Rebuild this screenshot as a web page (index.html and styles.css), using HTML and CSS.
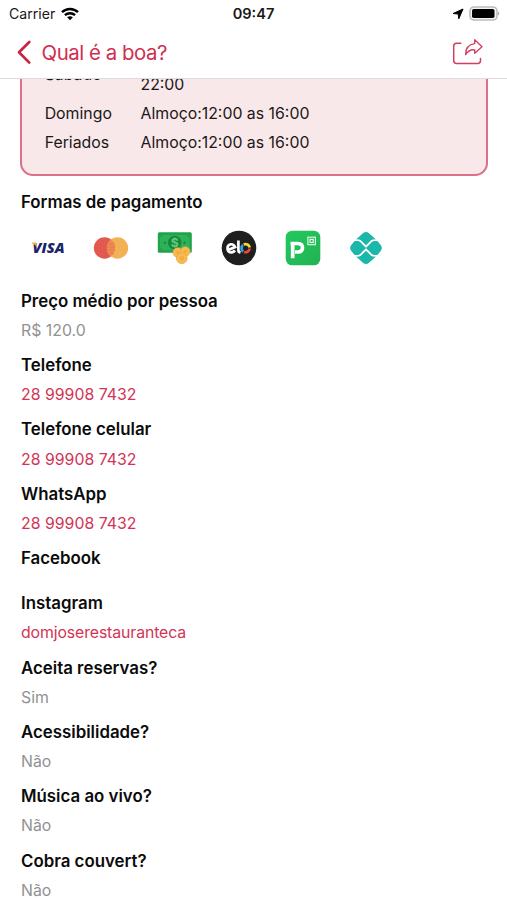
FILE: index.html
```
<!DOCTYPE html>
<html lang="pt-BR">
<head>
<meta charset="utf-8">
<meta name="viewport" content="width=device-width, initial-scale=1">
<title>Qual é a boa?</title>
<link rel="stylesheet" href="styles.css">
</head>
<body>
<header class="header">
  <div class="status">
    <div class="status-left">
      <span class="carrier">Carrier</span>
      <svg width="18" height="14" viewBox="0 0 18 14" fill="none" stroke="#000" stroke-width="2.4"><path d="M1 5.2C5.5.9 12.500.9 17 5.200M3.900 8.200C6.800 5.500 11.200 5.500 14.100 8.200"/><path d="M9 13.200 6.100 10.300Q9 8 11.900 10.300Z" fill="#000" stroke="none"/></svg>
    </div>
    <span class="clock">09:47</span>
    <div class="status-right">
      <svg width="12" height="12" viewBox="0 0 12 12"><path d="M11 1 6.800 10.800 6.200 6 1.100 5.500Z" fill="#000" stroke="#000" stroke-width="1" stroke-linejoin="round"/></svg>
      <svg width="31" height="16" viewBox="0 0 31 16"><rect x="1" y="1" width="27" height="13" rx="4" fill="#f4f4f4" stroke="#bcbcbc" stroke-width="1.600"/><rect x="3" y="2.900" width="22.500" height="9.200" rx="1.800"/><path d="M29 5.500Q31.500 7.500 29 9.500Z" fill="#aaa"/></svg>
    </div>
  </div>
  <nav class="nav">
    <a class="back">
      <svg width="16" height="25" viewBox="0 0 16 25"><path d="M13.300 2 3 12.300 13.300 22.600" fill="none" stroke="#cb2443" stroke-width="2.700" stroke-linecap="round" stroke-linejoin="round"/></svg>
      <span class="nav-title">Qual é a boa?</span>
    </a>
    <svg width="32" height="28" viewBox="0 0 32 28" fill="none" stroke="#d23f5f" stroke-width="1.500" stroke-linecap="round" stroke-linejoin="round"><path d="M8.800 5.200H4.500Q1.700 5.200 1.700 8V22.500Q1.700 25.500 4.700 25.500H25.700Q28.500 25.500 28.500 22.500V20.500"/><path d="M13.600 16.700C13.500 10.500 16.500 6.500 22.700 5.700V1.700L30 8.800 22.700 15.300V11.800C18.500 11.300 16 12.800 13.600 16.700Z" stroke-width="1.300"/></svg>
  </nav>
</header>
<main class="content">
  <section class="hours">
    <div class="hours-row tall"><span class="day">Sábado</span><span class="time last-line">22:00</span></div>
    <div class="hours-row"><span class="day">Domingo</span><span class="time">Almoço:12:00 as 16:00</span></div>
    <div class="hours-row"><span class="day">Feriados</span><span class="time">Almoço:12:00 as 16:00</span></div>
  </section>
  <h2 class="label">Formas de pagamento</h2>
  <div class="payments">
    <svg width="36" height="36" viewBox="0 0 36 36"><text x="2.500" y="23.400" textLength="32" lengthAdjust="spacingAndGlyphs" class="visa">VISA</text><path d="M1.800 12.600H5.800L7.200 17.500Q5 14 1.800 13.300Z" fill="#f5ae30"/></svg>
    <svg width="36" height="36" viewBox="0 0 36 36"><circle cx="11.500" cy="18" r="10.700" fill="#e25950"/><circle cx="24.500" cy="18" r="10.700" fill="#f3b155"/><path d="M18 9.500A10.700 10.700 0 0 1 18 26.500 10.700 10.700 0 0 1 18 9.500Z" fill="#ec8b51"/><path d="M14.500 14H21.500M14 17H22M14 20H22M15.500 23H20.500" stroke="#e77650" stroke-width=".8"/></svg>
    <svg width="36" height="36" viewBox="0 0 36 36"><rect x=".8" y="2.300" width="34" height="20.500" rx="1.500" fill="#20a34b"/><path d="M5.500 5H30Q30 7 32.500 7.500V17.500Q30 18 30 20.300H5.500Q5.500 18 3 17.500V7.500Q5.500 7 5.500 5Z" fill="#2eb257"/><circle cx="17.700" cy="12.600" r="6.800" fill="#15883c"/><text x="17.700" y="17" text-anchor="middle" class="cash">$</text><path d="M8 11.200 9.500 12.700 8 14.200 6.500 12.700ZM27.500 11.200 29 12.700 27.500 14.200 26 12.700Z" fill="#15883c"/><g fill="#f8bd52" stroke="#eba13b" stroke-width=".7"><circle cx="20.800" cy="22.500" r="4.800"/><circle cx="28.300" cy="21.500" r="4.800"/><circle cx="24.800" cy="28.300" r="5.400"/></g><g fill="#f3ac43"><circle cx="20.500" cy="22.500" r="2"/><circle cx="28.500" cy="21.300" r="2"/><circle cx="24.800" cy="28.300" r="2.500"/></g></svg>
    <svg width="36" height="36" viewBox="0 0 36 36"><circle cx="18" cy="18" r="17.300" fill="#201f20"/><g fill="none" stroke-width="2.700"><path d="M6.700 20.300 14.100 17Q12.700 13.900 9.700 14.300 6.300 15 6.500 18.700 7 22.500 10.700 22.300 12.700 22 14 20.500" stroke="#fff"/><path d="M17.400 10.500V20.300Q17.500 22 19.500 22.500" stroke="#fff"/><path d="M22.100 21.500A4.200 4.200 0 0 1 22 15" stroke="#31a9df"/><path d="M22.700 14.500A4.300 4.300 0 0 1 28.700 17.500" stroke="#f4d837"/><path d="M28.700 18.500A4.300 4.300 0 0 1 23 22" stroke="#e84c35"/></g></svg>
    <svg width="36" height="36" viewBox="0 0 36 36"><defs><linearGradient id="pp" x1="0" y1="0" x2="1" y2="1"><stop stop-color="#22c95e"/><stop offset="1" stop-color="#22b253"/></linearGradient></defs><rect x=".7" y=".7" width="34.600" height="34.600" rx="6.500" fill="url(#pp)"/><path d="M7.700 14V28.300M5.500 13.500H12.700Q17.500 13.500 17.500 17.700T12.700 22H10" fill="none" stroke="#fff" stroke-width="3.700"/><rect x="22.900" y="7.200" width="7.500" height="7.500" fill="none" stroke="#d9f7e4" stroke-width="1.200"/><rect x="25.100" y="9.400" width="3.100" height="3.100" fill="none" stroke="#e5faec" stroke-width="1.200"/></svg>
    <svg width="36" height="36" viewBox="0 0 36 36"><g fill="#1bb7aa"><path d="M8 9.500H10.500Q12 9.500 13 10.500L16.800 14.300Q18 15.500 19.200 14.300L23 10.500Q24 9.500 25.500 9.500H28L20.800 3Q18 1 15.200 3Z"/><path d="M8 26.500H10.500Q12 26.500 13 25.500L16.800 21.700Q18 20.500 19.200 21.700L23 25.500Q24 26.500 25.500 26.500H28L20.800 33Q18 35 15.200 33Z"/><path d="M6.600 11H10Q11.200 11 12 11.800L18.100 18 12 24.200Q11.200 25 10 25H6.600L3.300 21Q1 18 3.300 15Z"/><path d="M29.400 11H26Q24.800 11 24 11.800L17.900 18 24 24.200Q24.800 25 26 25H29.400L32.700 21Q35 18 32.700 15Z"/></g><path d="M7.500 10.300H10.500Q12 10.300 13 11.500L16.500 15.200Q18 16.600 19.500 15.200L23 11.500Q24 10.300 25.500 10.300H28.500M7.500 25.700H10.500Q12 25.700 13 24.500L16.500 20.800Q18 19.400 19.500 20.800L23 24.500Q24 25.700 25.500 25.700H28.500" fill="none" stroke="#fff" stroke-width="1.300"/></svg>
  </div>
  <section class="details">
    <div class="detail"><h2 class="label">Preço médio por pessoa</h2><p class="value">R$ 120.0</p></div>
    <div class="detail"><h2 class="label">Telefone</h2><a class="value link">28 99908 7432</a></div>
    <div class="detail"><h2 class="label">Telefone celular</h2><a class="value link">28 99908 7432</a></div>
    <div class="detail"><h2 class="label">WhatsApp</h2><a class="value link">28 99908 7432</a></div>
    <div class="detail empty"><h2 class="label">Facebook</h2></div>
    <div class="detail"><h2 class="label">Instagram</h2><a class="value link handle">domjoserestauranteca</a></div>
    <div class="detail"><h2 class="label">Aceita reservas?</h2><p class="value">Sim</p></div>
    <div class="detail"><h2 class="label">Acessibilidade?</h2><p class="value">Não</p></div>
    <div class="detail"><h2 class="label">Música ao vivo?</h2><p class="value">Não</p></div>
    <div class="detail"><h2 class="label">Cobra couvert?</h2><p class="value">Não</p></div>
  </section>
</main>
</body>
</html>
```
FILE: styles.css
```
* { box-sizing: border-box; }
body {
  margin: 0;
  height: 900px;
  overflow: hidden;
  display: flex;
  flex-direction: column;
  background: #fff;
  color: #1c1718;
  font-family: Inter, "Liberation Sans", sans-serif;
  font-size: 15.850px;
}
h2, p { margin: 0; }
svg { display: block; flex: none; }
.header {
  flex: none;
  height: 79px;
  border-bottom: 1px solid #dedcdc;
  background: #fff;
}
.status {
  display: grid;
  grid-template-columns: 1fr auto 1fr;
  align-items: center;
  height: 27px;
  padding: 0 7px 0 9px;
  font-size: 14.100px;
}
.status-left { display: flex; align-items: center; gap: 6px; }
.status-right { display: flex; align-items: center; justify-content: flex-end; gap: 5px; }
.clock { font-weight: 600; font-size: 14.600px; margin-left: -2px; }
.nav {
  display: flex;
  align-items: center;
  justify-content: space-between;
  height: 50px;
  padding: 0 23px 0 16px;
}
.back { display: flex; align-items: center; gap: 9.500px; }
.nav-title { color: #d02f4f; font-size: 20.400px; letter-spacing: -.450px; }
.content { flex: 1; min-height: 0; overflow: hidden; padding: 0 19px 0 20px; }
.hours {
  display: flex;
  flex-direction: column;
  gap: 9px;
  margin-top: -40px;
  padding: 13.900px 23px 21.600px 22.700px;
  border: 2px solid #dc7089;
  border-radius: 13px;
  background: #f9e8ea;
}
.hours-row { display: grid; grid-template-columns: 95.800px 1fr; align-items: center; line-height: 20px; }
.tall { height: 40px; }
.last-line { align-self: end; }
.label { font-size: 16.850px; font-weight: 600; line-height: 20px; color: #0b0b0b; padding-left: 1px; }
.hours + .label { margin-top: 15.500px; }
.payments { display: flex; gap: 27.800px; margin: 18.500px 0 24.300px 9.500px; }
.detail { height: 64.350px; display: flex; flex-direction: column; gap: 10.100px; }
.empty { height: 45.100px; }
.value { line-height: 19.300px; color: #929292; padding-left: 1px; }
.link { color: #d23555; }
.handle { letter-spacing: -.120px; }
.visa { font: italic 800 14.500px "Open Sans", sans-serif; fill: #1c246a; }
.cash { font: 700 12px Inter, sans-serif; fill: #67c77f; }
```
